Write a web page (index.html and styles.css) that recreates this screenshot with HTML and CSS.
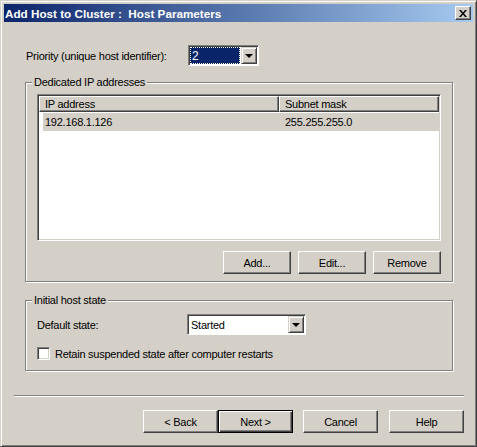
FILE: index.html
```html
<!DOCTYPE html>
<html>
<head>
<meta charset="utf-8">
<link rel="stylesheet" href="styles.css">
</head>
<body>
<div class="window">
  <div class="titlebar">
    <span class="title">Add Host to Cluster :&nbsp; Host Parameters</span>
    <button class="close" aria-label="Close"><svg width="8" height="7" viewBox="0 0 8 7"><path d="M0 0h2l2 2.5L6 0h2L5 3.5 8 7H6L4 4.5 2 7H0l3-3.5z" fill="#000"/></svg></button>
  </div>
  <div class="main">
    <div class="priority-row">
      <span class="lbl">Priority (unique host identifier):</span>
      <div class="combo combo-priority">
        <div class="combo-field selected"><span class="focus">2</span></div>
        <div class="dd-btn"><span class="arrow"></span></div>
      </div>
    </div>

    <div class="group group-ip">
      <div class="group-label">Dedicated IP addresses</div>
      <div class="listview">
        <div class="lv-header">
          <div class="lv-col col-ip">IP address</div>
          <div class="lv-col col-mask">Subnet mask</div>
        </div>
        <div class="lv-row selected-row">
          <div class="lv-cell col-ip">192.168.1.126</div>
          <div class="lv-cell col-mask">255.255.255.0</div>
        </div>
      </div>
      <div class="btn-row">
        <button class="btn btn-small">Add...</button>
        <button class="btn btn-small">Edit...</button>
        <button class="btn btn-small">Remove</button>
      </div>
    </div>

    <div class="group group-state">
      <div class="group-label">Initial host state</div>
      <div class="state-row">
        <span class="lbl">Default state:</span>
        <div class="combo combo-state">
          <div class="combo-field">Started</div>
          <div class="dd-btn"><span class="arrow"></span></div>
        </div>
      </div>
      <label class="check-row">
        <span class="checkbox"></span>
        <span class="lbl">Retain suspended state after computer restarts</span>
      </label>
    </div>
  </div>
  <div class="separator"></div>
  <div class="footer">
    <button class="btn btn-wide">&lt; Back</button>
    <button class="btn btn-wide default">Next &gt;</button>
    <button class="btn btn-wide gap">Cancel</button>
    <button class="btn btn-wide gap2">Help</button>
  </div>
</div>
</body>
</html>
```

FILE: styles.css
```css
* { box-sizing: border-box; }
html, body { margin: 0; padding: 0; background: #d4d0c8; }
body {
  font-family: "Liberation Sans", Arial, sans-serif;
  font-size: 11px;
  letter-spacing: -0.25px;
  color: #000;
}
.window {
  width: 477px;
  height: 447px;
  background: #d4d0c8;
  border: 1px solid;
  border-color: #d4d0c8 #404040 #404040 #d4d0c8;
  box-shadow: inset 1px 1px 0 #fff, inset -1px -1px 0 #808080;
  padding: 3px;
}
.titlebar {
  height: 18px;
  display: flex;
  align-items: center;
  justify-content: space-between;
  background: linear-gradient(to right, #0a246a, #a6caf0);
}
.title {
  color: #fff;
  font-weight: bold;
  font-size: 11.7px;
  letter-spacing: 0;
  padding-left: 1px;
  white-space: nowrap;
}
.close {
  width: 16px;
  height: 14px;
  margin-right: 2px;
  padding: 0;
  background: #d4d0c8;
  border: 1px solid;
  border-color: #fff #404040 #404040 #fff;
  box-shadow: inset -1px -1px 0 #808080;
  display: flex;
  align-items: center;
  justify-content: center;
}
.main {
  padding: 0 20px 0 21px;
}
.priority-row {
  display: flex;
  align-items: center;
  margin-top: 23px;
  height: 21px;
}
.priority-row .lbl { padding-left: 1px; width: 163px; }
.combo {
  display: flex;
  height: 21px;
  border: 1px solid;
  border-color: #808080 #fff #fff #808080;
  box-shadow: inset 1px 1px 0 #404040;
  padding: 1px;
  background: #fff;
}
.combo-priority { width: 71px; }
.combo-field {
  flex: 1;
  display: flex;
  align-items: center;
  padding-left: 2px;
  background: #fff;
}
.combo-field.selected {
  padding: 0 1px 0 0;
}
.combo-field .focus {
  flex: 1;
  height: 100%;
  background: #0a246a;
  color: #fff;
  padding-left: 2px;
  display: flex;
  align-items: center;
  outline: 1px dotted #fff;
  outline-offset: -1px;
  font-size: 12px;
}
.dd-btn {
  width: 16px;
  height: 17px;
  background: #d4d0c8;
  border: 1px solid;
  border-color: #d4d0c8 #404040 #404040 #d4d0c8;
  box-shadow: inset 1px 1px 0 #fff, inset -1px -1px 0 #808080;
  display: flex;
  align-items: center;
  justify-content: center;
}
.arrow {
  width: 0;
  height: 0;
  border-left: 4px solid transparent;
  border-right: 4px solid transparent;
  border-top: 4px solid #000;
  margin-top: 1px;
}
.group {
  border: 1px solid #808080;
  box-shadow: inset 1px 1px 0 #fff, 1px 1px 0 #fff;
  padding: 0 11px;
}
.group-label {
  width: fit-content;
  margin: -7px 0 0 -5px;
  padding: 0 2px;
  line-height: 13px;
  background: #d4d0c8;
}
.group-ip {
  margin-top: 16px;
  height: 200px;
}
.listview {
  margin-top: 5px;
  height: 147px;
  background: #fff;
  border: 1px solid;
  border-color: #808080 #fff #fff #808080;
  box-shadow: inset 1px 1px 0 #404040, inset -1px -1px 0 #d4d0c8;
  padding: 1px;
}
.lv-header {
  display: flex;
  height: 16px;
}
.lv-col {
  height: 16px;
  line-height: 14px;
  background: #d4d0c8;
  border: 1px solid;
  border-color: #fff #404040 #404040 #fff;
  box-shadow: inset -1px -1px 0 #808080;
  padding-left: 5px;
}
.lv-header .col-ip { width: 240px; }
.lv-header .col-mask { flex: 1; }
.lv-row {
  display: flex;
  height: 18px;
  align-items: center;
  margin-left: 4px;
  margin-top: 1px;
}
.selected-row { background: #d4d0c8; }
.lv-row .col-ip { width: 236px; padding-left: 2px; }
.lv-row .col-mask { flex: 1; padding-left: 6px; }
.btn-row {
  display: flex;
  justify-content: flex-end;
  gap: 7px;
  margin-top: 10px;
}
.btn {
  font-family: inherit;
  font-size: 11px;
  letter-spacing: -0.25px;
  color: #000;
  height: 23px;
  padding: 0;
  background: #d4d0c8;
  border: 1px solid;
  border-color: #fff #404040 #404040 #fff;
  box-shadow: inset -1px -1px 0 #808080;
}
.btn-small { width: 68px; }
.btn-wide { width: 75px; }
.btn.default {
  border: 1px solid #000;
  box-shadow: inset 1px 1px 0 #fff, inset -1px -1px 0 #404040, inset -2px -2px 0 #808080;
}
.group-state {
  margin-top: 18px;
  padding-bottom: 10px;
}
.state-row {
  display: flex;
  align-items: center;
  margin-top: 7px;
}
.state-row .lbl { width: 150px; }
.combo-state { width: 119px; }
.check-row {
  display: flex;
  align-items: center;
  margin-top: 12px;
  height: 13px;
}
.checkbox {
  width: 13px;
  height: 13px;
  background: #fff;
  border: 1px solid;
  border-color: #808080 #fff #fff #808080;
  box-shadow: inset 1px 1px 0 #404040, inset -1px -1px 0 #d4d0c8;
  margin-right: 5px;
}
.separator {
  margin: 24px 9px 0 10px;
  height: 2px;
  border-top: 1px solid #808080;
  border-bottom: 1px solid #fff;
}
.footer {
  display: flex;
  justify-content: flex-end;
  margin: 13px 9px 0 0;
}
.footer .gap { margin-left: 10px; }
.footer .gap2 { margin-left: 11px; }
```
